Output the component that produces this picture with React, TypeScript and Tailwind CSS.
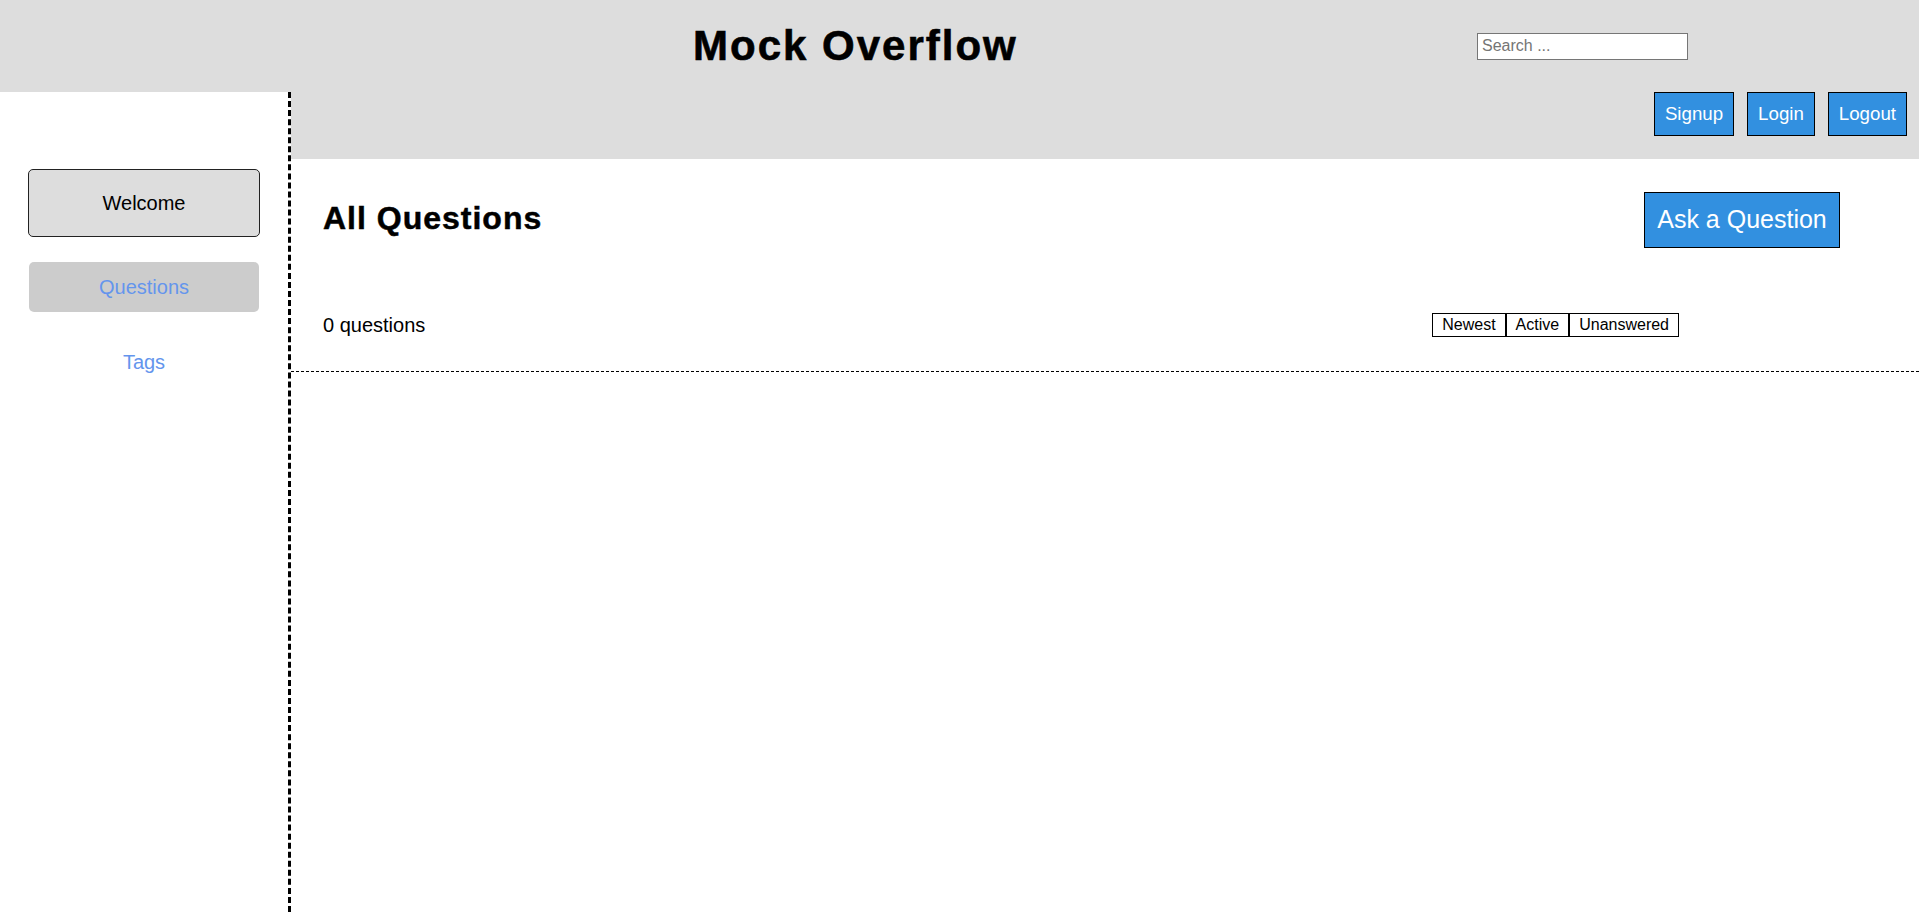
export default function App() {
  return (
    <div className="min-h-[912px] bg-white font-['Liberation_Sans',Arial,sans-serif] text-black">
      <header className="flex h-[92px] items-center bg-[#dddddd]">
        <h1 className="ml-[693px] text-[42px] font-bold leading-none tracking-[2px] [-webkit-text-stroke:0.6px_black]">Mock Overflow</h1>
        <input
          type="text"
          placeholder="Search ..."
          className="ml-auto mr-[231px] h-[27px] w-[211px] border border-[#767676] bg-white px-[4px] text-[16px] placeholder:text-[#757575] focus:outline-none"
        />
      </header>

      <div className="flex">
        <nav className="flex min-h-[820px] w-[291px] shrink-0 flex-col items-center border-r-[3px] border-dashed border-black pt-[77px] text-[20px]">
          <div className="flex h-[68px] w-[232px] items-center justify-center rounded-[5px] border border-[#222] bg-[#dddddd]">Welcome</div>
          <a className="mt-[25px] flex h-[50px] w-[230px] items-center justify-center rounded-[5px] bg-[#cccccc] text-[#6495ed]">Questions</a>
          <a className="mt-[25px] flex h-[50px] w-[230px] items-center justify-center text-[#6495ed]">Tags</a>
        </nav>

        <main className="flex-1">
          <div className="flex h-[67px] items-start justify-end gap-[13px] bg-[#dddddd] pr-[12px]">
            {["Signup", "Login", "Logout"].map((label) => (
              <button key={label} className="flex h-[44px] items-center border border-black bg-[#3290e0] px-[10px] text-[18.7px] text-white">
                {label}
              </button>
            ))}
          </div>

          <div className="border-b border-dashed border-black pb-[34px]">
            <div className="mt-[33px] flex h-[56px] items-center justify-between pl-[32px] pr-[79px]">
              <h2 className="mb-[4px] text-[32px] font-bold leading-none tracking-[1px] [-webkit-text-stroke:0.5px_black]">All Questions</h2>
              <button className="flex h-[56px] w-[196px] items-center justify-center border border-black bg-[#3290e0] text-[25px] text-white">
                Ask a Question
              </button>
            </div>
            <div className="mt-[65px] flex h-[24px] items-center justify-between pl-[32px] pr-[240px]">
              <span className="text-[20px]">0 questions</span>
              <div className="flex">
                {["Newest", "Active", "Unanswered"].map((label) => (
                  <button key={label} className="flex h-[24px] items-center border border-black bg-white px-[9px] text-[16px] leading-none">
                    {label}
                  </button>
                ))}
              </div>
            </div>
          </div>
        </main>
      </div>
    </div>
  );
}
